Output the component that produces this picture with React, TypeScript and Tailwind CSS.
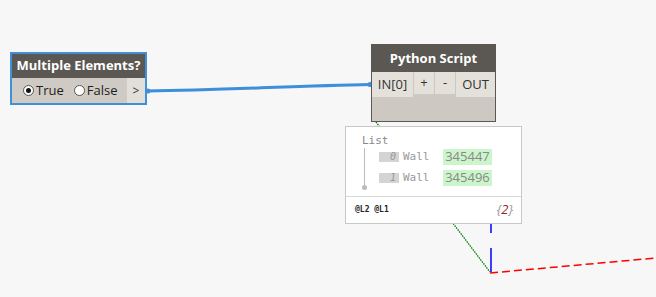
import React from "react";

const ui = { fontFamily: '"Open Sans", "Noto Sans", sans-serif' };
const mono = { fontFamily: '"DejaVu Sans Mono", "Liberation Mono", monospace' };

function Radio({ checked, label }: { checked?: boolean; label: string }) {
  return (
    <div className="flex items-center gap-[2px]">
      <span className="w-[11px] h-[11px] rounded-full border border-[#555] bg-white flex items-center justify-center">
        {checked && <span className="w-[5px] h-[5px] rounded-full bg-[#111]" />}
      </span>
      <span className="text-[13px] text-[#222] leading-none">{label}</span>
    </div>
  );
}

function BooleanNode() {
  return (
    <div
      className="absolute left-[10px] top-[52px] w-[137px] h-[53px] border-2 border-[#3f8fd9] flex flex-col"
      style={ui}
    >
      <div className="h-[24px] bg-[#5b5753] text-white font-bold text-[13px] flex items-center justify-center">
        Multiple Elements?
      </div>
      <div className="flex-1 flex bg-[#cfcbc4]">
        <div className="flex-1 flex items-center gap-[10px] pl-[11px]">
          <Radio checked label="True" />
          <Radio label="False" />
        </div>
        <div className="w-[18px] bg-[#e2dfd9] flex items-center justify-center text-[12px] text-[#333]">&gt;</div>
      </div>
    </div>
  );
}

function PythonNode() {
  return (
    <div
      className="absolute left-[371px] top-[44px] w-[125px] h-[78px] border border-[#5b5753] bg-[#cdc9c2] flex flex-col"
      style={ui}
    >
      <div className="h-[27px] bg-[#5b5753] text-white font-bold text-[13px] flex items-center justify-center">
        Python Script
      </div>
      <div className="flex items-start h-[25px] text-[13px] text-[#333]">
        <div className="w-[41px] h-[25px] bg-[#e4e1db] flex items-center justify-center">IN[0]</div>
        <div className="ml-[1px] w-[20px] h-[22px] bg-[#e4e1db] flex items-center justify-center">+</div>
        <div className="ml-[1px] w-[20px] h-[22px] bg-[#e4e1db] flex items-center justify-center">-</div>
        <div className="ml-[1px] flex-1 h-[25px] bg-[#e4e1db] flex items-center justify-center">OUT</div>
      </div>
    </div>
  );
}

function Row({ i, id }: { i: string; id: string }) {
  return (
    <div className="flex items-center h-[16px]">
      <span className="w-[20px] h-[10px] bg-[#d4d4d4] text-[#999] italic text-[10px] leading-[10px] flex items-center justify-end pr-[3px]" style={mono}>
        {i}
      </span>
      <span className="ml-[4px] w-[40px] text-[11px] text-[#999]" style={mono}>Wall</span>
      <span className="w-[49px] h-[16px] bg-[#ccf5cc] text-[#888] text-[13px] flex items-center justify-center" style={ui}>
        {id}
      </span>
    </div>
  );
}

function WatchPanel() {
  return (
    <div className="absolute left-[345px] top-[126px] w-[177px] h-[98px] bg-white border border-[#c8c8c8] flex flex-col">
      <div className="flex-1 pl-[16px] pt-[7px]">
        <div className="text-[11px] text-[#888] leading-[14px]" style={mono}>List</div>
        <div className="flex">
          <div className="w-[4px] flex flex-col items-center">
            <div className="w-px h-[38px] bg-[#bbb]" />
            <div className="w-[5px] h-[5px] rounded-full bg-[#bbb] -mt-[1px]" />
          </div>
          <div className="ml-[13px] mt-[1px] flex flex-col gap-[5px]">
            <Row i="0" id="345447" />
            <Row i="1" id="345496" />
          </div>
        </div>
      </div>
      <div className="h-[27px] border-t border-[#d8d8d8] flex items-center justify-between pl-[9px] pr-[8px]">
        <span className="text-[8px] text-[#222] font-bold" style={mono}>@L2 @L1</span>
        <span className="italic text-[13px] text-[#999]" style={ui}>
          {"{"}<span className="text-[#9b2020]">2</span>{"}"}
        </span>
      </div>
    </div>
  );
}

export default function App() {
  return (
    <div className="relative w-[656px] h-[297px] bg-[#f7f7f7] overflow-hidden">
      <svg className="absolute inset-0" width="656" height="297">
        <line x1="376" y1="122" x2="490" y2="272" stroke="#007a00" strokeWidth="1.3" strokeDasharray="1.5 1" />
        <line x1="491" y1="224" x2="491" y2="233" stroke="#0000ff" strokeWidth="1.5" />
        <line x1="491" y1="248" x2="491" y2="272" stroke="#0000ff" strokeWidth="1.5" />
        <line x1="490" y1="273" x2="656" y2="258" stroke="#ff0000" strokeWidth="1.5" strokeDasharray="8 4" />
        <path d="M147 91 C 230 90, 290 86, 371 84.5" stroke="#3d8fdc" strokeWidth="3" fill="none" />
        <circle cx="148" cy="91" r="2.5" fill="#3d8fdc" />
        <circle cx="370" cy="84.5" r="2.5" fill="#3d8fdc" />
      </svg>
      <BooleanNode />
      <PythonNode />
      <WatchPanel />
    </div>
  );
}
